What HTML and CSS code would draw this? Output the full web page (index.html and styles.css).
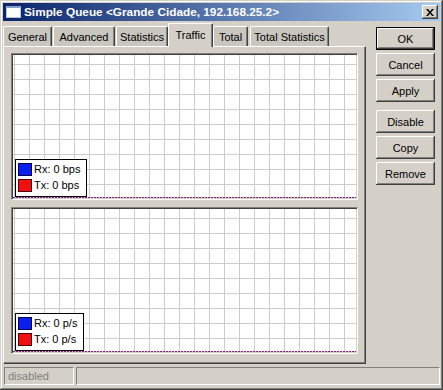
FILE: index.html
```html
<!DOCTYPE html>
<html lang="en">
<head>
    <meta charset="UTF-8">
    <title>Simple Queue</title>
    <link rel="stylesheet" href="styles.css">
</head>
<body>
    <div class="window">
        <div class="titlebar">
            <span class="app-icon"></span>
            <span class="title">Simple Queue &lt;Grande Cidade, 192.168.25.2&gt;</span>
            <span class="close-btn">
                <svg width="8" height="7" viewBox="0 0 8 7">
                    <path d="M0 0h2l2 2.5L6 0h2L5 3.5 8 7H6L4 4.5 2 7H0l3-3.5z" fill="#000"/>
                </svg>
            </span>
        </div>

        <div class="main">
            <div class="left">
                <div class="tabs">
                    <div class="tab tab-general">General</div>
                    <div class="tab tab-advanced">Advanced</div>
                    <div class="tab tab-statistics">Statistics</div>
                    <div class="tab tab-traffic active">Traffic</div>
                    <div class="tab tab-total">Total</div>
                    <div class="tab tab-totalstats">Total Statistics</div>
                </div>
                <div class="panel">
                    <div class="graph">
                        <div class="zero-line"></div>
                        <div class="legend">
                            <div class="legend-row"><span class="swatch rx"></span>Rx: 0 bps</div>
                            <div class="legend-row"><span class="swatch tx"></span>Tx: 0 bps</div>
                        </div>
                    </div>
                    <div class="graph">
                        <div class="zero-line"></div>
                        <div class="legend">
                            <div class="legend-row"><span class="swatch rx"></span>Rx: 0 p/s</div>
                            <div class="legend-row"><span class="swatch tx"></span>Tx: 0 p/s</div>
                        </div>
                    </div>
                </div>
            </div>

            <div class="buttons">
                <button class="btn default">OK</button>
                <button class="btn">Cancel</button>
                <button class="btn">Apply</button>
                <button class="btn spaced">Disable</button>
                <button class="btn">Copy</button>
                <button class="btn">Remove</button>
            </div>
        </div>

        <div class="statusbar">
            <div class="status-cell first">disabled</div>
            <div class="status-cell rest"></div>
        </div>
    </div>
</body>
</html>
```

FILE: styles.css
```css
body {
    margin: 0;
    font-family: "Liberation Sans", Arial, sans-serif;
    font-size: 11px;
    color: #000;
    background-color: #d4d0c8;
}
.window {
    width: 443px;
    height: 390px;
    box-sizing: border-box;
    padding: 3px;
    display: flex;
    flex-direction: column;
    background-color: #d4d0c8;
    box-shadow: inset -1px -1px #404040, inset 1px 1px #d4d0c8,
                inset -2px -2px #808080, inset 2px 2px #ffffff;
}

/* title bar */
.titlebar {
    height: 18px;
    display: flex;
    align-items: center;
    padding-left: 3px;
    background: linear-gradient(to right, #0a246a, #a6caf0);
    color: white;
    font-weight: bold;
    font-size: 11.8px;
}
.app-icon {
    width: 15px;
    height: 12px;
    box-sizing: border-box;
    background-color: white;
    border: 1px solid #b8c4e0;
    border-top: 2px solid #8a9cc8;
}
.title {
    margin-left: 3px;
    flex: 1;
    white-space: nowrap;
}
.close-btn {
    width: 16px;
    height: 14px;
    margin-right: 2px;
    display: flex;
    align-items: center;
    justify-content: center;
    background-color: #d4d0c8;
    box-shadow: inset -1px -1px #404040, inset 1px 1px #ffffff,
                inset -2px -2px #808080;
}

/* content */
.main {
    display: flex;
    margin-top: 2px;
}
.left {
    width: 363px;
}
.tabs {
    display: flex;
    align-items: flex-end;
    height: 23px;
}
.tab {
    height: 20px;
    box-sizing: border-box;
    display: flex;
    align-items: center;
    justify-content: center;
    margin-right: 1px;
    background-color: #c9c6bf;
    border-top: 1px solid #ffffff;
    border-left: 1px solid #ffffff;
    border-right: 1px solid #404040;
    border-radius: 2px 2px 0 0;
    box-shadow: inset -1px 0 #808080;
}
.tab.active {
    position: relative;
    z-index: 1;
    height: 24px;
    margin-bottom: -1px;
    padding-bottom: 2px;
    background-color: #d4d0c8;
}
.tab-general { width: 49px; }
.tab-advanced { width: 62px; }
.tab-statistics { width: 52px; margin-right: 0; }
.tab-traffic { width: 45px; margin-right: 0; }
.tab-total { width: 35px; margin-right: 2px; }
.tab-totalstats { width: 79px; }

.panel {
    height: 318px;
    box-sizing: border-box;
    padding: 6px 7px 9px 7px;
    display: flex;
    flex-direction: column;
    gap: 7px;
    border-top: 1px solid #ffffff;
    border-left: 1px solid #ffffff;
    border-right: 1px solid #404040;
    border-bottom: 1px solid #404040;
    box-shadow: inset -1px -1px #808080;
}
.graph {
    position: relative;
    width: 347px;
    height: 147px;
    box-sizing: border-box;
    border-top: 1px solid #808080;
    border-left: 1px solid #808080;
    border-right: 1px solid #ffffff;
    border-bottom: 1px solid #ffffff;
    background-color: white;
    background-image: linear-gradient(to right, #cccccc 1px, transparent 1px),
                      linear-gradient(to bottom, #cccccc 1px, transparent 1px);
    background-size: 15px 15px;
    background-position: 2px 10px;
    box-shadow: inset 1px 1px #404040, inset -1px -1px #d4d0c8;
}
.zero-line {
    position: absolute;
    left: 1px;
    right: 1px;
    bottom: 1px;
    height: 1px;
    background: repeating-linear-gradient(to right, #7a2a70 0 2px, #e6b4dc 2px 3px);
}
.legend {
    position: absolute;
    left: 3px;
    bottom: 2px;
    padding: 1px 6px 3px 2px;
    background-color: white;
    border: 1px solid #000;
}
.legend-row {
    height: 16px;
    display: flex;
    align-items: center;
    white-space: nowrap;
}
.swatch {
    width: 14px;
    height: 13px;
    box-sizing: border-box;
    margin-right: 2px;
}
.swatch.rx {
    background-color: #0a1ef0;
    border: 1px solid #000050;
}
.swatch.tx {
    background-color: #f01010;
    border: 1px solid #500000;
}

/* side buttons */
.buttons {
    display: flex;
    flex-direction: column;
    gap: 3px;
    margin-left: 10px;
    margin-top: 4px;
}
.btn {
    width: 59px;
    height: 23px;
    padding: 0;
    font-family: inherit;
    font-size: 11px;
    color: #000;
    background-color: #d4d0c8;
    border: none;
    box-shadow: inset -1px -1px #404040, inset 1px 1px #ffffff,
                inset -2px -2px #808080;
}
.btn.default {
    box-shadow: inset 0 0 0 1px #000, inset -2px -2px #404040, inset 2px 2px #ffffff,
                inset -3px -3px #808080;
}
.btn.spaced {
    margin-top: 5px;
}

/* status bar */
.statusbar {
    display: flex;
    margin-top: 3px;
    height: 18px;
}
.status-cell {
    box-sizing: border-box;
    height: 18px;
    display: flex;
    align-items: center;
    padding-left: 3px;
    color: #808080;
    border-top: 1px solid #808080;
    border-left: 1px solid #808080;
    border-right: 1px solid #ffffff;
    border-bottom: 1px solid #ffffff;
}
.status-cell.first {
    width: 70px;
    margin-left: 1px;
}
.status-cell.rest {
    flex: 1;
    margin-left: 2px;
}
```
